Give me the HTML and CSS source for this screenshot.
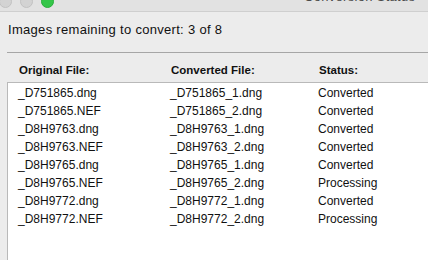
FILE: index.html
```html
<!DOCTYPE html>
<html lang="en">
<head>
  <meta charset="UTF-8" />
  <meta name="viewport" content="width=device-width, initial-scale=1.0"/>
  <title>Conversion Status</title>
  <link rel="stylesheet" href="styles.css">
</head>
<body>

  <header class="titlebar">
    <span class="light"></span>
    <span class="light"></span>
    <span class="light green"></span>
    <span class="title">Conversion Status</span>
  </header>

  <main class="content">
    <p class="remaining">Images remaining to convert: 3 of 8</p>
    <hr class="sep" />

    <div class="cols head">
      <span>Original File:</span>
      <span>Converted File:</span>
      <span>Status:</span>
    </div>

    <div class="list">
      <div class="cols row"><span>_D751865.dng</span><span>_D751865_1.dng</span><span>Converted</span></div>
      <div class="cols row"><span>_D751865.NEF</span><span>_D751865_2.dng</span><span>Converted</span></div>
      <div class="cols row"><span>_D8H9763.dng</span><span>_D8H9763_1.dng</span><span>Converted</span></div>
      <div class="cols row"><span>_D8H9763.NEF</span><span>_D8H9763_2.dng</span><span>Converted</span></div>
      <div class="cols row"><span>_D8H9765.dng</span><span>_D8H9765_1.dng</span><span>Converted</span></div>
      <div class="cols row"><span>_D8H9765.NEF</span><span>_D8H9765_2.dng</span><span>Processing</span></div>
      <div class="cols row"><span>_D8H9772.dng</span><span>_D8H9772_1.dng</span><span>Converted</span></div>
      <div class="cols row"><span>_D8H9772.NEF</span><span>_D8H9772_2.dng</span><span>Processing</span></div>
    </div>
  </main>

</body>
</html>
```

FILE: styles.css
```css
html, body {
  height: 100%;
}

body {
  margin: 0;
  display: flex;
  flex-direction: column;
  overflow: hidden;
  background: #ececec;
  color: #111;
  font-family: "Liberation Sans", Arial, Helvetica, sans-serif;
}

.titlebar {
  flex: none;
  display: flex;
  align-items: flex-start;
  height: 11px;
  background: #e2e2e2;
  border-bottom: 1px solid #cfcfcf;
  overflow: hidden;
}

.light {
  flex: none;
  width: 11px;
  height: 11px;
  margin-top: -5px;
  margin-left: 8px;
  border-radius: 50%;
  background: #d3d3d3;
  border: 0.5px solid #c2c2c2;
}

.light:first-child {
  margin-left: -1px;
}

.light.green {
  background: #35c649;
  border-color: #2aae3c;
}

.title {
  margin-left: 250px;
  margin-top: -11px;
  font-size: 13px;
  letter-spacing: 0.3px;
  line-height: 16px;
  color: #4a4a4a;
}

.content {
  flex: 1;
  display: flex;
  flex-direction: column;
  min-height: 0;
  padding-left: 7px;
}

.remaining {
  margin: 10px 0 0 1px;
  font-size: 13px;
  line-height: 16px;
  letter-spacing: 0.3px;
}

.sep {
  margin: 14px 0 0;
  border: none;
  border-top: 1px solid #a6a6a6;
}

.cols {
  display: grid;
  grid-template-columns: 152px 148px 1fr;
}

.head {
  margin-top: 10px;
  padding-left: 12px;
  font-size: 11.5px;
  font-weight: bold;
  line-height: 14px;
}

.list {
  flex: 1;
  margin-top: 5px;
  padding-top: 1px;
  background: #fff;
  border-top: 1px solid #b9b9b9;
  border-left: 1px solid #b9b9b9;
}

.row {
  padding-left: 10px;
  font-size: 12px;
  line-height: 18px;
}
```
